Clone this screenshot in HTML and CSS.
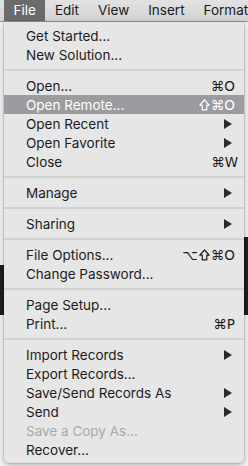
FILE: index.html
```html
<!DOCTYPE html>
<html>
<head>
<meta charset="utf-8">
<link rel="stylesheet" href="styles.css">
</head>
<body>
<div class="screen">
  <div class="menubar">
    <span class="mb-item active">File</span>
    <span class="mb-item">Edit</span>
    <span class="mb-item">View</span>
    <span class="mb-item">Insert</span>
    <span class="mb-item">Format</span>
  </div>
  <div class="backdrop">
    <div class="strip left"><div class="dark"></div></div>
    <div class="strip right"><div class="dark"></div></div>
  </div>
  <div class="menu">
    <div class="item"><span>Get Started...</span></div>
    <div class="item"><span>New Solution...</span></div>
    <div class="sep"></div>
    <div class="item"><span>Open...</span><span class="key">⌘O</span></div>
    <div class="item hl"><span>Open Remote...</span><span class="key"><svg class="shift" width="11" height="12" viewBox="0 0 11 12"><path d="M5.5 1 L10.2 6.2 H7.8 V10.8 H3.2 V6.2 H0.8 Z"/></svg>⌘O</span></div>
    <div class="item"><span>Open Recent</span><svg class="arrow" width="8" height="10" viewBox="0 0 8 10"><polygon points="0,0 8,5 0,10"/></svg></div>
    <div class="item"><span>Open Favorite</span><svg class="arrow" width="8" height="10" viewBox="0 0 8 10"><polygon points="0,0 8,5 0,10"/></svg></div>
    <div class="item"><span>Close</span><span class="key wide">⌘W</span></div>
    <div class="sep"></div>
    <div class="item"><span>Manage</span><svg class="arrow" width="8" height="10" viewBox="0 0 8 10"><polygon points="0,0 8,5 0,10"/></svg></div>
    <div class="sep"></div>
    <div class="item"><span>Sharing</span><svg class="arrow" width="8" height="10" viewBox="0 0 8 10"><polygon points="0,0 8,5 0,10"/></svg></div>
    <div class="sep"></div>
    <div class="item"><span>File Options...</span><span class="key">⌥<svg class="shift" width="11" height="12" viewBox="0 0 11 12"><path d="M5.5 1 L10.2 6.2 H7.8 V10.8 H3.2 V6.2 H0.8 Z"/></svg>⌘O</span></div>
    <div class="item"><span>Change Password...</span></div>
    <div class="sep"></div>
    <div class="item"><span>Page Setup...</span></div>
    <div class="item"><span>Print...</span><span class="key">⌘P</span></div>
    <div class="sep"></div>
    <div class="item"><span>Import Records</span><svg class="arrow" width="8" height="10" viewBox="0 0 8 10"><polygon points="0,0 8,5 0,10"/></svg></div>
    <div class="item"><span>Export Records...</span></div>
    <div class="item"><span>Save/Send Records As</span><svg class="arrow" width="8" height="10" viewBox="0 0 8 10"><polygon points="0,0 8,5 0,10"/></svg></div>
    <div class="item"><span>Send</span><svg class="arrow" width="8" height="10" viewBox="0 0 8 10"><polygon points="0,0 8,5 0,10"/></svg></div>
    <div class="item disabled"><span>Save a Copy As...</span></div>
    <div class="item"><span>Recover...</span></div>
  </div>
</div>
</body>
</html>
```

FILE: styles.css
```css
* { box-sizing: border-box; }
html, body {
  margin: 0;
  padding: 0;
  width: 248px;
  height: 466px;
  overflow: hidden;
  background: #ececec;
}
.screen {
  position: relative;
  width: 248px;
  height: 466px;
  font-family: Inter, "Liberation Sans", sans-serif;
  color: #1c1c1c;
}
.menubar {
  height: 22px;
  display: flex;
  align-items: stretch;
  padding-left: 4px;
  background: linear-gradient(#e2e2e2, #d3d3d3);
  border-bottom: 1px solid #9c9c9c;
  font-size: 13.5px;
  color: #1a1a1a;
}
.mb-item {
  display: flex;
  align-items: center;
  padding: 0 9.5px 1px 9.5px;
  white-space: nowrap;
}
.mb-item.active {
  background: #6b6b6b;
  color: #ffffff;
}
.backdrop {
  height: 444px;
  display: flex;
  justify-content: space-between;
  background: #f2f2f2;
}
.strip {
  width: 4px;
  display: flex;
  flex-direction: column;
}
.strip.left { padding-top: 243px; }
.strip.right { padding-top: 215px; }
.strip.left .dark { height: 50px; background: #1e1e1e; }
.strip.right .dark { height: 78px; background: #1e1e1e; }
.menu {
  position: absolute;
  left: 4px;
  top: 22px;
  width: 240px;
  padding: 4px 0 4px 0;
  background: #e6e6e6;
  border-radius: 0 0 5px 5px;
  box-shadow: 0 2px 6px rgba(0,0,0,0.25), 0 0 0 0.5px rgba(0,0,0,0.18);
  font-size: 13.5px;
}
.item {
  height: 19px;
  display: flex;
  align-items: center;
  justify-content: space-between;
  padding: 0 12px 0 22px;
  white-space: nowrap;
}
.item.hl {
  background: #9c9ca0;
  color: #ffffff;
}
.item.disabled { color: #a9a9a9; }
.key {
  display: flex;
  align-items: center;
  font-family: "DejaVu Sans", sans-serif;
  font-size: 13.5px;
  margin-right: -3px;
}
.key.wide { margin-right: -6px; }
.shift {
  fill: none;
  stroke: currentColor;
  stroke-width: 1.2;
  stroke-linejoin: round;
  margin: 0 1px 0 1px;
}
.arrow {
  fill: #2a2a2a;
  margin-right: 0px;
}
.sep {
  height: 12px;
  display: flex;
  align-items: center;
}
.sep::before {
  content: "";
  display: block;
  width: 100%;
  height: 2px;
  background: #d2d2d2;
}
```
